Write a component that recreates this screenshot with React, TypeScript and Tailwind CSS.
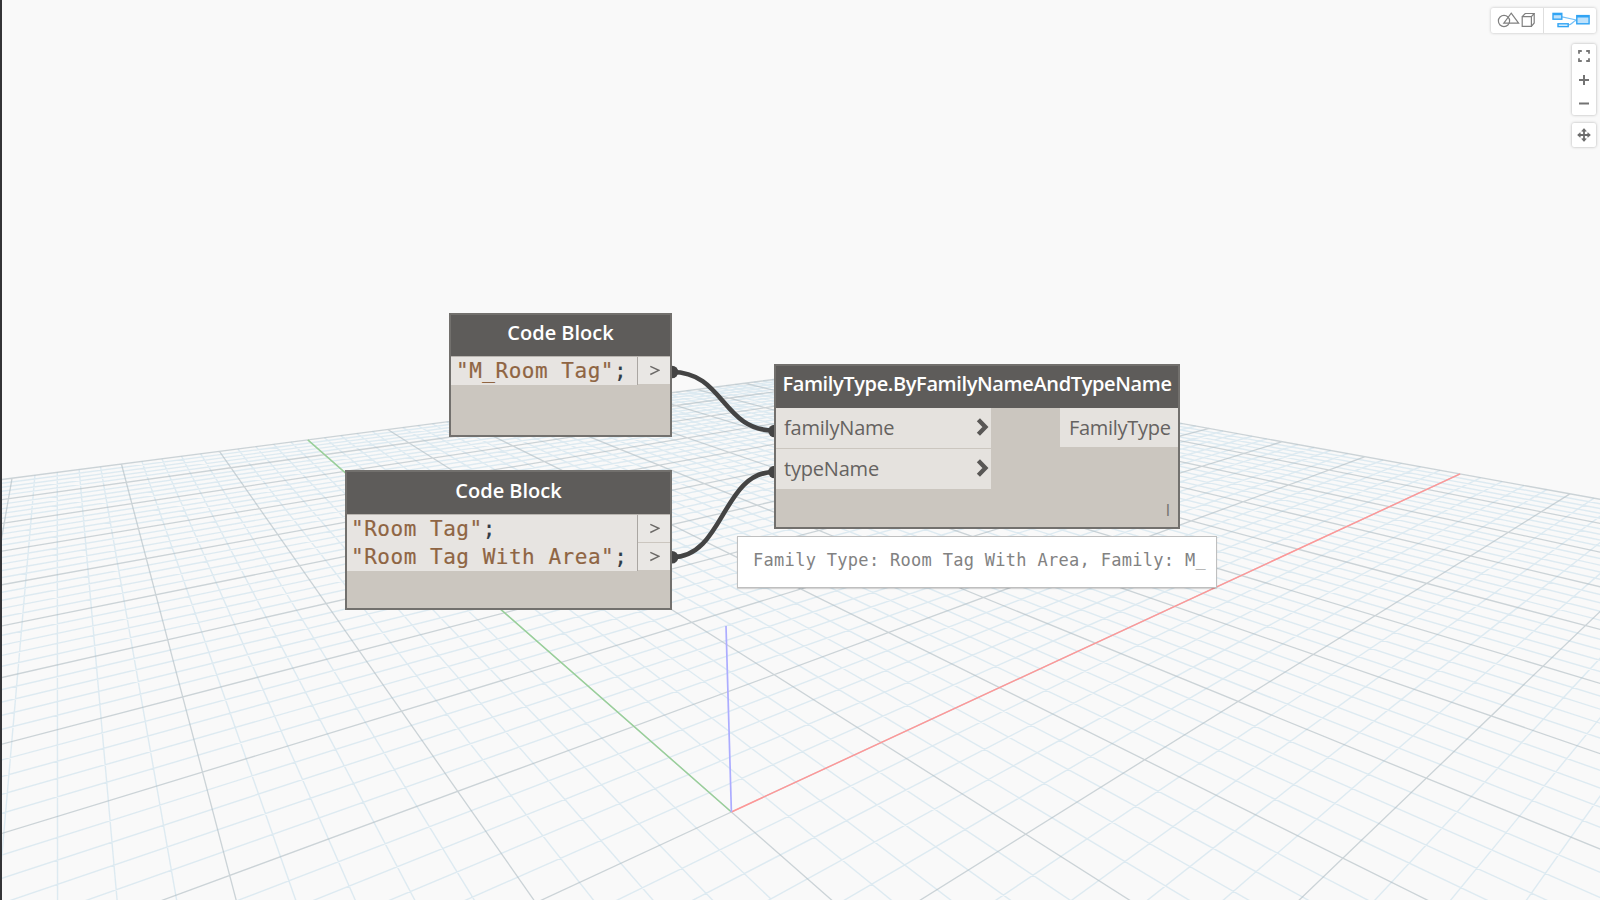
import type { ReactNode } from "react";

const ORIGIN = { x: 731.4, y: 812 };
const EXTENT = 50;
const NEAR = 0.08;

// Perspective terms of the ground plane: depth grows along both axes.
const depth = (u: number, v: number) => 1 + 0.02656 * u + 0.0338 * v;

function project(u: number, v: number) {
  const w = depth(u, v);
  return {
    x: ORIGIN.x + (33.93 * u - 22.79 * v) / w,
    y: ORIGIN.y + (-15.74 * u - 20.02 * v) / w,
  };
}

function segment(u0: number, v0: number, u1: number, v1: number) {
  const w0 = depth(u0, v0);
  const w1 = depth(u1, v1);
  if (w1 <= NEAR) return "";
  const t = w0 < NEAR ? (NEAR - w0) / (w1 - w0) : 0;
  const a = project(u0 + (u1 - u0) * t, v0 + (v1 - v0) * t);
  const b = project(u1, v1);
  return `M${a.x.toFixed(2)} ${a.y.toFixed(2)}L${b.x.toFixed(2)} ${b.y.toFixed(2)}`;
}

function gridPaths() {
  let minor = "";
  let major = "";
  for (let i = -EXTENT; i <= EXTENT; i++) {
    const d = segment(i, -EXTENT, i, EXTENT) + segment(-EXTENT, i, EXTENT, i);
    if (i % 5 === 0) major += d;
    else minor += d;
  }
  return { minor, major };
}

const GRID = gridPaths();
const X_END = project(EXTENT, 0);
const Y_END = project(0, EXTENT);

function Scene() {
  return (
    <svg className="absolute inset-0" width="1600" height="900" viewBox="0 0 1600 900" fill="none">
      <path d={GRID.minor} stroke="#c8dfeb" strokeOpacity="0.56" strokeWidth="1.4" />
      <path d={GRID.major} stroke="#b0bdc4" strokeOpacity="0.64" strokeWidth="1.3" />
      <path d={`M${ORIGIN.x} ${ORIGIN.y}L${Y_END.x} ${Y_END.y}`} stroke="#98d098" strokeWidth="1.4" />
      <path d={`M${ORIGIN.x} ${ORIGIN.y}L${X_END.x} ${X_END.y}`} stroke="#ff9696" strokeWidth="1.4" />
      <path d={`M${ORIGIN.x} ${ORIGIN.y}L726 626`} stroke="#acacff" strokeWidth="1.7" />
    </svg>
  );
}

function Wires() {
  return (
    <svg className="absolute inset-0" width="1600" height="900" viewBox="0 0 1600 900" fill="none">
      <g stroke="#444444" strokeWidth="4.6">
        <path d="M672 372C724 372 722 430.5 774 430.5" />
        <path d="M672 557.3C724 557.3 722 472 774 472" />
      </g>
      <g fill="#444444">
        <circle cx="672" cy="372" r="6.3" />
        <circle cx="672" cy="557.3" r="6.3" />
        <circle cx="774.5" cy="431" r="6.3" />
        <circle cx="774.5" cy="472" r="6.3" />
      </g>
    </svg>
  );
}

function Node({ place, title, titleClass, children }: { place: string; title: string; titleClass: string; children: ReactNode }) {
  return (
    <section className={`absolute flex flex-col border-2 border-[#72706d] bg-[#cbc6bf] ${place}`}>
      <h2 className={`shrink-0 bg-[#5e5c5a] text-center text-[20px] font-semibold whitespace-nowrap text-white ${titleClass}`}>
        {title}
      </h2>
      {children}
    </section>
  );
}

function CodeBody({ lines, inset }: { lines: string[]; inset: string }) {
  return (
    <div className="flex border-t border-[#b9b5b0]">
      <pre
        className={`flex-1 bg-[#e7e4e1] font-['DejaVu_Sans_Mono',monospace] text-[21px] leading-[28px] tracking-[0.52px] text-[#8f6543] [-webkit-text-stroke:0.2px] ${inset}`}
      >
        {lines.map((line) => (
          <div key={line} className="h-[28px]">
            {line}
            <span className="text-[#2f3b46]">;</span>
          </div>
        ))}
      </pre>
      <div className="flex w-[33px] flex-col border-l border-[#aaa6a2]">
        {lines.map((line, i) => (
          <div
            key={line}
            className={`flex h-[27px] items-center justify-center bg-[#e9e7e4] pb-[1px] ${i > 0 ? "mt-px" : ""}`}
          >
            <svg width="11" height="11" viewBox="0 0 11 11" fill="none">
              <path d="M1.3 1.3L9.9 5.3L1.3 9.5" stroke="#6b6967" strokeWidth="1.4" />
            </svg>
          </div>
        ))}
      </div>
    </div>
  );
}

function InputPort({ name }: { name: string }) {
  return (
    <div className="flex h-[40px] w-[215px] items-center justify-between bg-[#e5e2de] pr-[2px] pl-[8px]">
      <span className="text-[20px] leading-[38px] tracking-[-0.2px]">{name}</span>
      <svg width="13" height="18" viewBox="0 0 13 18" fill="none" className="mb-[2px]">
        <path d="M2.4 1.8L9.4 9L2.4 16.2" stroke="#595755" strokeWidth="4.4" />
      </svg>
    </div>
  );
}

function ViewToggle() {
  return (
    <div className="flex h-[25px] rounded-[2px] bg-white shadow-[0_0_3px_rgba(0,0,0,0.25)]">
      <button className="flex w-[53px] items-center justify-center border-r border-[#dedede] pr-[2px] pb-[1px]">
        <svg width="38" height="16" viewBox="0 0 38 16" fill="none" stroke="#808080" strokeWidth="1.2">
          <circle cx="7" cy="9" r="5.6" />
          <path d="M14.2 1.2L21.6 11.2H6.8Z" />
          <path d="M25.2 4.7H34.4V14.3H25.2ZM25.2 4.7L28.2 1.5H37.2L34.4 4.7M37.2 1.5V11L34.4 14.3" />
        </svg>
      </button>
      <button className="flex w-[52px] items-center justify-center pb-[1px] pl-[2px]">
        <svg width="38" height="16" viewBox="0 0 38 16" fill="none" stroke="#31a4f4" strokeWidth="1.4">
          <path d="M10 4.8L24.5 8M16.5 13C20 13 21 8.7 24.5 8.4" stroke="#75c1f7" strokeWidth="1.2" />
          <rect x="1" y="1.4" width="8.8" height="5.8" fill="#bfe2fb" />
          <path d="M1 2.2H9.8" strokeWidth="2" />
          <rect x="6" y="11.8" width="10.2" height="2.8" fill="#e3f3fd" />
          <rect x="24.8" y="3.6" width="12.3" height="8.2" fill="#bfe2fb" />
          <path d="M24.8 4.4H37.1" strokeWidth="2.2" />
        </svg>
      </button>
    </div>
  );
}

function Controls() {
  return (
    <div className="absolute top-[8px] right-[4px] flex flex-col items-end">
      <ViewToggle />
      <div className="mt-[11px] flex h-[71px] w-[24px] flex-col rounded-[2px] bg-white shadow-[0_0_3px_rgba(0,0,0,0.3)]">
        <button className="flex h-[24px] items-center justify-center">
          <svg width="12" height="12" viewBox="0 0 12 12" fill="none" stroke="#777777" strokeWidth="1.8">
            <path d="M1 3.8V1H3.8M8.2 1H11V3.8M11 8.2V11H8.2M3.8 11H1V8.2" />
          </svg>
        </button>
        <button className="flex h-[24px] items-center justify-center">
          <svg width="12" height="12" viewBox="0 0 12 12" fill="none" stroke="#737373" strokeWidth="2">
            <path d="M6 1V11M1 6H11" />
          </svg>
        </button>
        <button className="flex h-[23px] items-center justify-center">
          <svg width="12" height="12" viewBox="0 0 12 12" fill="none" stroke="#737373" strokeWidth="2">
            <path d="M1 5.5H11" />
          </svg>
        </button>
      </div>
      <button className="mt-[8px] flex h-[24px] w-[24px] items-center justify-center rounded-[2px] bg-white shadow-[0_0_3px_rgba(0,0,0,0.3)]">
        <svg width="14" height="14" viewBox="0 0 14 14">
          <path d="M7 1V13M1 7H13" stroke="#6d6d6d" strokeWidth="1.8" />
          <path
            d="M4.7 3.2L7 0.6L9.3 3.2ZM4.7 10.8L7 13.4L9.3 10.8ZM3.2 4.7L0.6 7L3.2 9.3ZM10.8 4.7L13.4 7L10.8 9.3Z"
            fill="#6d6d6d"
            stroke="#6d6d6d"
            strokeWidth="0.7"
          />
        </svg>
      </button>
    </div>
  );
}

export default function App() {
  return (
    <main className="relative h-[900px] w-[1600px] overflow-hidden border-l-2 border-[#343437] bg-[#f9f9f9] font-['Open_Sans','Noto_Sans',sans-serif]">
      <div className="absolute inset-y-0 -left-[2px] w-[1600px]">
        <Scene />
        <Wires />

        <Node place="left-[449px] top-[313px] h-[124px] w-[223px]" title="Code Block" titleClass="h-[41px] leading-[35px]">
          <CodeBody lines={['"M_Room Tag"']} inset="pl-[5px]" />
        </Node>

        <Node place="left-[345px] top-[470px] h-[140px] w-[327px]" title="Code Block" titleClass="h-[42px] leading-[37px]">
          <CodeBody lines={['"Room Tag"', '"Room Tag With Area"']} inset="pl-[4px]" />
        </Node>

        <Node
          place="left-[774px] top-[364px] h-[165px] w-[406px]"
          title="FamilyType.ByFamilyNameAndTypeName"
          titleClass="h-[42px] leading-[35px] tracking-[-0.37px]"
        >
          <div className="flex flex-1 justify-between text-[#656361]">
            <div className="flex flex-col gap-px">
              <InputPort name="familyName" />
              <InputPort name="typeName" />
            </div>
            <div className="flex flex-col items-end justify-between">
              <div className="h-[39px] w-[118px] bg-[#e5e2de] pl-[9px] text-[20px] leading-[39px] tracking-[-0.3px]">FamilyType</div>
              <span className="pr-[8px] pb-[6px] text-[17px] leading-[22px] text-[#777370]">l</span>
            </div>
          </div>
        </Node>

        <div className="absolute top-[536px] left-[737px] h-[52px] w-[480px] border border-[#bfbfbf] bg-white pl-[15px] font-['DejaVu_Sans_Mono',monospace] text-[17px] leading-[47px] tracking-[0.3px] whitespace-nowrap text-[#828282] shadow-[0_1px_1px_rgba(0,0,0,0.15)]">
          Family Type: Room Tag With Area, Family: M_
        </div>

        <Controls />
      </div>
    </main>
  );
}
